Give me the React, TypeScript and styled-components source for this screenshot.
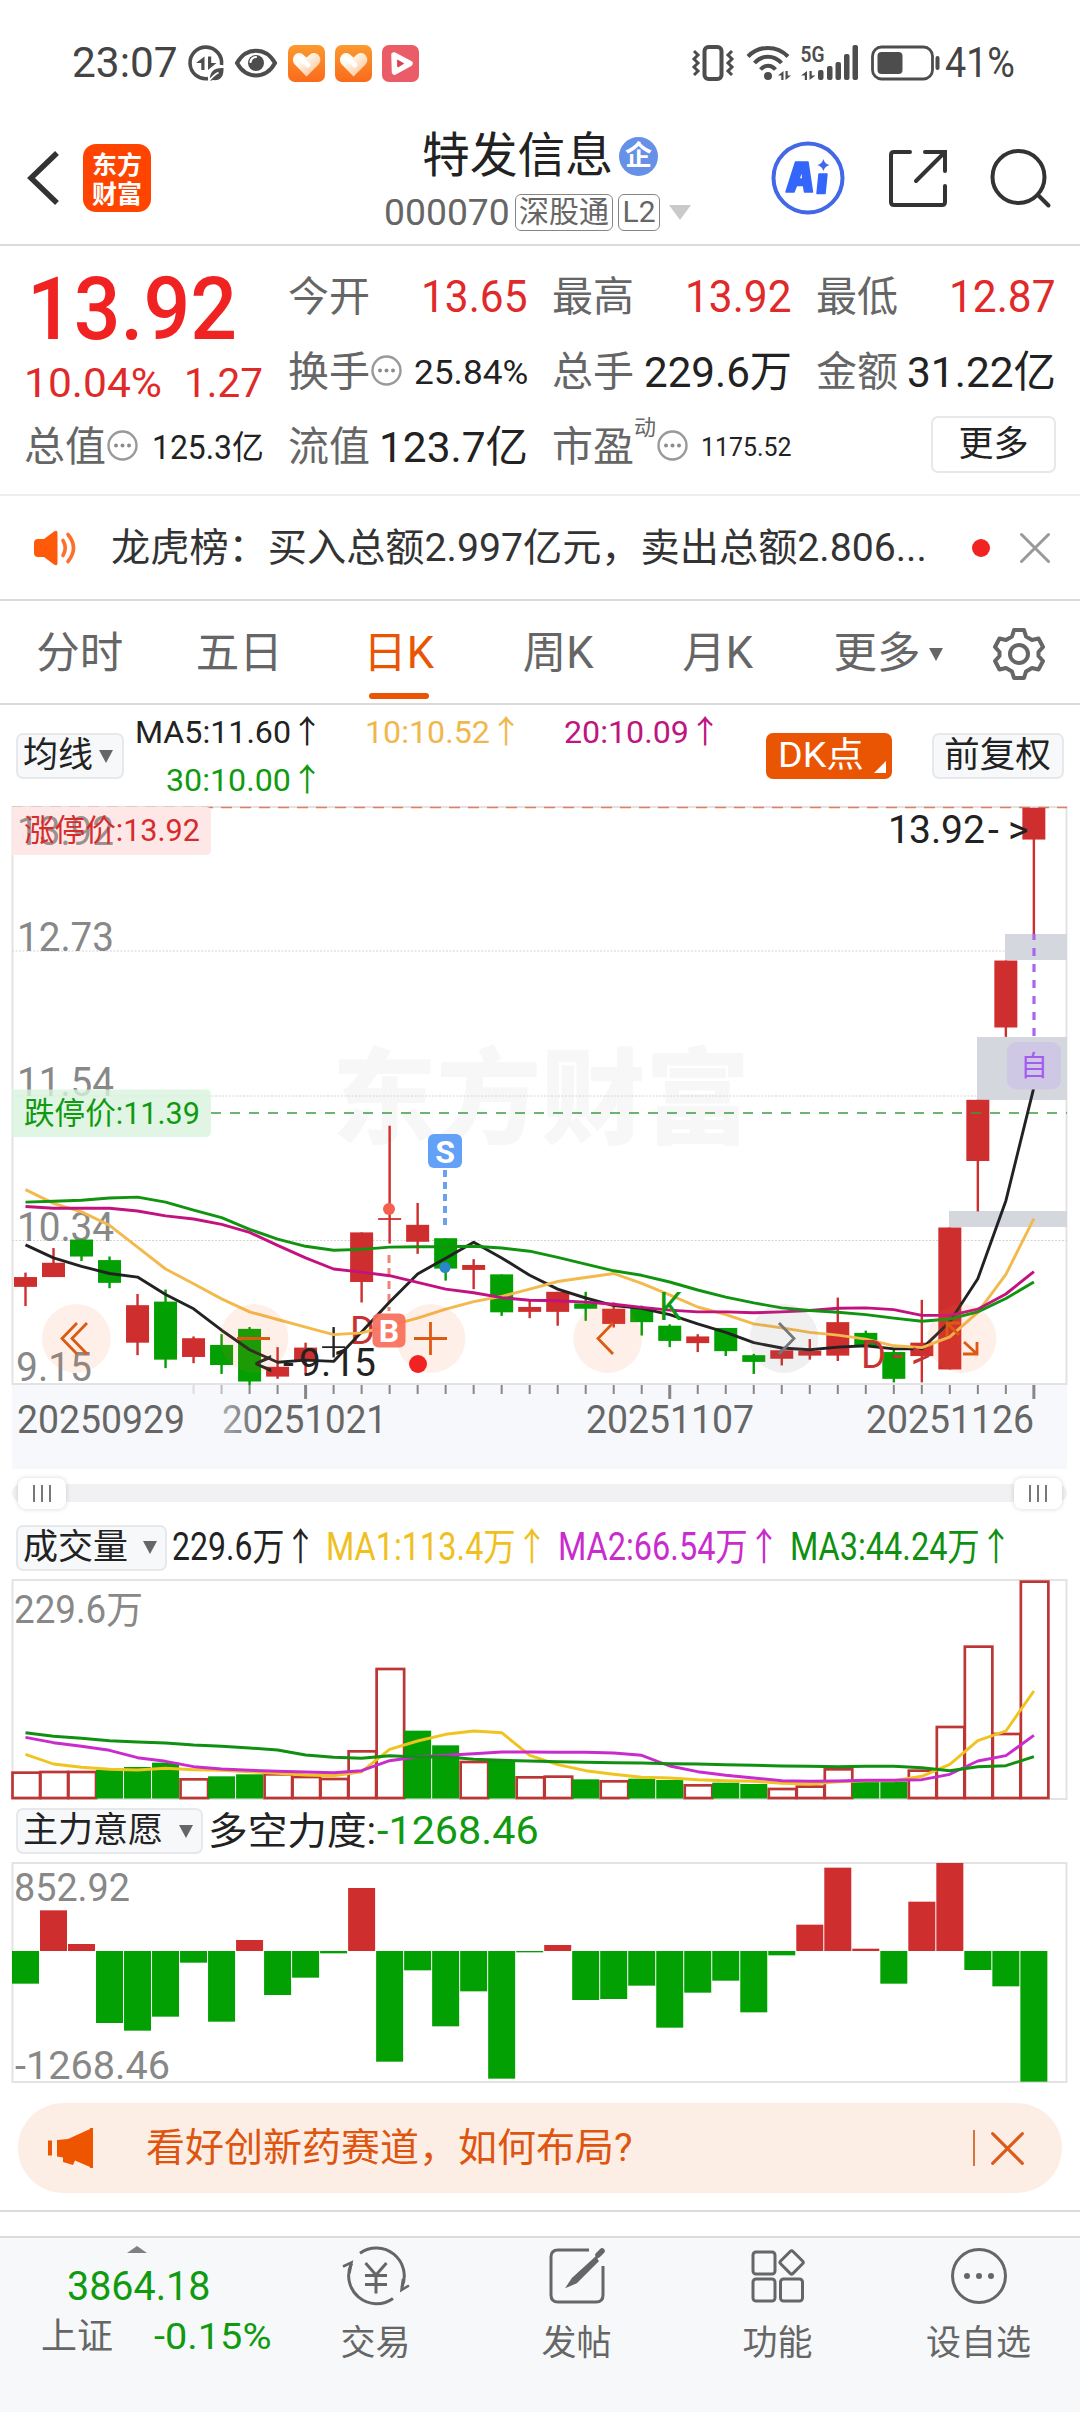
import React, { useLayoutEffect, useRef, useState } from "react";
import styled, { createGlobalStyle, css } from "styled-components";

const FONT = `Roboto, "Noto Sans CJK SC", sans-serif`;
const UP = "#cf2e2e";
const DOWN = "#02a002";
const ORANGE = "#ea5504";
const GREY = "#666666";
const INK = "#222222";

const GlobalStyle = createGlobalStyle`
  * { box-sizing: border-box; }
  body { margin: 0; background: #fff; font-family: ${FONT}; color: ${INK}; }
  svg { display: block; flex: none; overflow: visible; }
  svg text { font-family: ${FONT}; }
`;

/* ---------- text that fills a fixed advance width ---------- */

const FitBox = styled.span<{ $w: number }>`
  display: block;
  flex: none;
  width: ${(p) => p.$w}px;
  white-space: nowrap;
`;
const FitInner = styled.span`
  display: inline-block;
  transform-origin: 0 50%;
`;

function Fit({ w, children }: { w: number; children: React.ReactNode }) {
  const ref = useRef<HTMLSpanElement>(null);
  const [k, setK] = useState(1);
  useLayoutEffect(() => {
    if (ref.current && ref.current.offsetWidth) setK(w / ref.current.offsetWidth);
  }, [w, children]);
  return (
    <FitBox $w={w}>
      <FitInner ref={ref} style={{ transform: `scaleX(${k})` }}>
        {children}
      </FitInner>
    </FitBox>
  );
}

/* ---------- page frame ---------- */

const Page = styled.div`
  width: 1080px;
  height: 2412px;
  display: flex;
  flex-direction: column;
  background: #fff;
  overflow: hidden;
`;

/* ---------- status bar ---------- */

const StatusBar = styled.div`
  height: 100px;
  padding: 26px 65px 0 72px;
  display: flex;
  align-items: center;
  justify-content: space-between;
  font-size: 42px;
  line-height: 76px;
  color: #444;
`;
const StatusGroup = styled.div<{ $gap: number }>`
  display: flex;
  align-items: center;
  gap: ${(p) => p.$gap}px;
`;

const DataSaverIcon = () => (
  <svg width="36" height="36" viewBox="0 0 36 36" fill="none">
    <path d="M33.5 20A15.8 15.8 0 1 0 20 33.6" stroke="#4d4d4d" strokeWidth="3.6" />
    <path d="M16.5 11.5v13.5h-3.2v-7H8zM20 25V11.5h3.2v6.5h5.3z" fill="#4d4d4d" />
    <path d="M22 36c-1-9 4-13.500 13.500-13 .5 9-3.500 13-10.500 12z" fill="#4d4d4d" />
    <path d="M20.500 36.500c3-4 6-7 10-9" stroke="#fff" strokeWidth="1.800" />
  </svg>
);
const EyeIcon = () => (
  <svg width="44" height="30" viewBox="0 0 44 30" fill="none">
    <path d="M3 15C12 -1.500 32 -1.500 41 15C32 31.500 12 31.500 3 15Z" stroke="#4d4d4d" strokeWidth="4" />
    <circle cx="22" cy="15" r="8" fill="#4d4d4d" />
    <path d="M16.500 14a6 6 0 0 1 5.500-5" stroke="#fff" strokeWidth="2.200" strokeLinecap="round" />
  </svg>
);
const HeartAppIcon = ({ id }: { id: string }) => (
  <svg width="37" height="37" viewBox="0 0 37 37">
    <defs>
      <linearGradient id={id} x1="0" y1="0" x2="0" y2="1">
        <stop offset="0" stopColor="#fb9a2e" />
        <stop offset="1" stopColor="#fa6a1c" />
      </linearGradient>
      <linearGradient id={id + "h"} x1="0" y1="0" x2="1" y2="1">
        <stop offset="0.300" stopColor="#fffaf0" />
        <stop offset="1" stopColor="#fdb983" />
      </linearGradient>
    </defs>
    <rect width="37" height="37" rx="7" fill={`url(#${id})`} />
    <path d="M18.500 31.500L6.800 19.500C1.500 13.500 8.500 5 14.700 9.200L18.500 12.500L22.300 9.200C28.500 5 36 13.500 30.500 19.500Z" fill={`url(#${id}h)`} />
    <path d="M11 12.500l9 7.500" stroke="#fff" strokeWidth="5" strokeLinecap="round" />
  </svg>
);
const PlayAppIcon = () => (
  <svg width="37" height="37" viewBox="0 0 37 37">
    <rect width="37" height="37" rx="7" fill="#ea5c68" />
    <path d="M12 10L28 18.500L12.500 27Z" fill="#ea5c68" stroke="#fff" strokeWidth="5.500" strokeLinejoin="round" />
    <path d="M15.500 14.500L22 18.500L16 22.500Z" fill="#dd3f55" />
  </svg>
);
const VibrateIcon = () => (
  <svg width="50" height="36" viewBox="0 0 50 36" fill="none" stroke="#4d4d4d">
    <rect x="12.500" y="2" width="17" height="32" rx="4" strokeWidth="4" />
    <path d="M2 6l4 4-4 4 4 4-4 4 4 4-4 4M40 6l-4 4 4 4-4 4 4 4-4 4 4 4" strokeWidth="3" />
  </svg>
);
const WifiIcon = () => (
  <svg width="50" height="36" viewBox="0 0 50 36" fill="none" stroke="#4d4d4d" strokeWidth="4">
    <path d="M2 11.500C13 0 31 0 42 11.500M8.500 18C16 9.500 28 9.500 35.500 18M14.500 24.500C19 19.500 25 19.500 29.500 24.500" />
    <circle cx="22" cy="31" r="4" fill="#4d4d4d" stroke="none" />
    <path d="M37.500 26v9h-2.200v-4.500H32zM39.500 35v-9h2.200v4.500H45z" fill="#4d4d4d" stroke="none" />
  </svg>
);
const SignalIcon = () => (
  <svg width="67" height="36" viewBox="0 0 67 36" fill="#4d4d4d">
    <text x="0.500" y="17" fontSize="22.500" fontWeight="600" textLength="24" lengthAdjust="spacingAndGlyphs">5G</text>
    <path d="M7 26v9H4.800v-4.500H1zM9.500 35v-9h2.200v4.500H15.500z" />
    <rect x="18" y="25" width="5.500" height="10" rx="2" />
    <rect x="27" y="21" width="5.500" height="14" rx="2" />
    <rect x="35.500" y="17" width="5.500" height="18" rx="2" />
    <rect x="44" y="9" width="5.500" height="26" rx="2" />
    <rect x="52.500" y="0" width="5.500" height="35" rx="2" />
  </svg>
);
const BatteryIcon = () => (
  <svg width="70" height="36" viewBox="0 0 70 36" fill="none">
    <rect x="1.500" y="2" width="60" height="32" rx="9" stroke="#4d4d4d" strokeWidth="2.800" />
    <rect x="6.500" y="7" width="25" height="22" rx="4" fill="#4d4d4d" />
    <path d="M66.500 13v10" stroke="#4d4d4d" strokeWidth="4" strokeLinecap="round" />
  </svg>
);

/* ---------- header ---------- */

const Header = styled.header`
  height: 146px;
  border-bottom: 2px solid #d9dadb;
  padding: 0 28px 0 25px;
  display: grid;
  grid-template-columns: 340px 1fr 280px;
`;
const HeaderSide = styled.div<{ $right?: boolean }>`
  display: flex;
  align-items: center;
  height: 156px;
  gap: ${(p) => (p.$right ? 42.5 : 21)}px;
  justify-content: ${(p) => (p.$right ? "flex-end" : "flex-start")};
`;
const Logo = styled.div`
  width: 68px;
  height: 68px;
  border-radius: 13px;
  background: #ff4400;
  color: #fff;
  display: grid;
  place-content: center;
  font: 700 25px/29px "Noto Sans CJK SC", sans-serif;
`;
const TitleBlock = styled.div`
  display: flex;
  flex-direction: column;
  padding-top: 27px;
`;
const TitleRow = styled.div`
  display: flex;
  align-items: center;
  padding-left: 57px;
  gap: 6px;
  height: 58px;
  font-size: 48px;
  line-height: 58px;
`;
const Badge = styled.span`
  width: 39px;
  height: 39px;
  border-radius: 50%;
  background: #6691e6;
  color: #fff;
  font-size: 27px;
  font-weight: 700;
  line-height: 38px;
  text-align: center;
`;
const CodeRow = styled.div`
  display: flex;
  align-items: center;
  padding-left: 19px;
  gap: 5px;
  height: 55px;
  font-size: 37px;
  line-height: 55px;
  color: ${GREY};
`;
const CodeTag = styled.span<{ $w: number }>`
  width: ${(p) => p.$w}px;
  height: 37px;
  margin-top: -1px;
  border: 1.500px solid #858585;
  border-radius: 6px;
  font-size: 30px;
  line-height: 34px;
  display: flex;
  justify-content: center;
`;
const Caret = styled.span<{ $w: number; $h: number; $c: string; $ml?: number; $up?: boolean }>`
  flex: none;
  width: 0;
  height: 0;
  margin-left: ${(p) => p.$ml ?? 0}px;
  border: solid transparent;
  border-width: 0 ${(p) => p.$w / 2}px;
  ${(p) =>
    p.$up
      ? css`border-bottom: ${p.$h}px solid ${p.$c};`
      : css`border-top: ${p.$h}px solid ${p.$c};`}
`;

const BackIcon = () => (
  <svg width="37" height="56" viewBox="0 0 37 56" fill="none">
    <path d="M32 3L6 28L32 53" stroke="#333" strokeWidth="5.500" />
  </svg>
);
const AiIcon = () => (
  <svg width="74" height="74" viewBox="0 0 74 74">
    <circle cx="37" cy="37" r="34.500" fill="none" stroke="#4268e8" strokeWidth="4" />
    <path d="M15 51L24.500 21H37L41.500 51H33.500L32.500 44.500H25.500L23 51ZM28 38H31.800L31 29Z" fill="#3566fb" fillRule="evenodd" stroke="#3566fb" strokeWidth="1.500" strokeLinejoin="round" />
    <path d="M48 33H56L54 52.500H46Z" fill="#3566fb" stroke="#3566fb" strokeWidth="1.500" strokeLinejoin="round" />
    <path d="M52.500 18Q53.500 23 58.500 24Q53.500 25.500 52.500 30Q51 25.500 46.500 24Q51 23 52.500 18Z" fill="#4268e8" />
  </svg>
);
const ShareIcon = () => (
  <svg width="60" height="60" viewBox="0 0 60 60" fill="none" stroke="#333" strokeWidth="4" strokeLinecap="round">
    <path d="M22 4H6Q3 4 3 7V54Q3 57 6 57H54Q57 57 57 54V38M37 4H57V23M57 4L28 33" />
  </svg>
);
const SearchIcon = () => (
  <svg width="62" height="60" viewBox="0 0 62 60" fill="none" stroke="#333" strokeWidth="4" strokeLinecap="round">
    <circle cx="28.500" cy="29" r="26" />
    <path d="M48 47L58.500 57.500" />
  </svg>
);

/* ---------- quote ---------- */

const Quote = styled.section`
  height: 250px;
  border-bottom: 2px solid #eeeeef;
  padding: 14px 24px 0;
  display: grid;
  grid-template-columns: 239px 239px 239px 239px;
  grid-template-rows: 75px 75px 74px;
  column-gap: 25px;
`;
const PriceCell = styled.div`
  grid-row: span 2;
  display: flex;
  flex-direction: column;
  color: #e02a2a;
`;
const Price = styled.div`
  height: 97px;
  padding-left: 3px;
  font-size: 87px;
  line-height: 98px;
  font-weight: 500;
  color: #f02222;
`;
const ChangeRow = styled.div`
  display: flex;
  justify-content: space-between;
  font-size: 41px;
  line-height: 53px;
`;
const Cell = styled.div`
  display: flex;
  align-items: center;
  justify-content: space-between;
  height: 75px;
  line-height: 75px;
`;
const Label = styled.span`
  display: flex;
  align-items: center;
  font-size: 41px;
  color: ${GREY};
`;
const Value = styled.span<{ $size: number; $red?: boolean }>`
  margin-right: -1px;
  font-size: ${(p) => p.$size}px;
  color: ${(p) => (p.$red ? "#e02a2a" : INK)};
`;
const Sup = styled.span`
  align-self: flex-start;
  font-size: 22px;
  line-height: 36px;
`;
const MoreButton = styled.button`
  justify-self: end;
  align-self: center;
  width: 125px;
  height: 57px;
  margin: -5px -1px 0 0;
  border: 2px solid #e6e8e9;
  border-radius: 7px;
  background: #fff;
  color: ${INK};
  font: 35px/50px ${FONT};
  padding: 0;
`;
const InfoBox = styled.span`
  margin: -4px 0 0 1px;
`;
const InfoDot = () => (
  <InfoBox>
    <svg width="31" height="31" viewBox="0 0 31 31" fill="#8c8c8c">
      <circle cx="15.500" cy="15.500" r="14" fill="none" stroke="#999" strokeWidth="2.400" />
      <circle cx="9" cy="15.500" r="2" />
      <circle cx="15.500" cy="15.500" r="2" />
      <circle cx="22" cy="15.500" r="2" />
    </svg>
  </InfoBox>
);

/* ---------- news ---------- */

const News = styled.section`
  height: 105px;
  border-bottom: 2px solid #d9dadb;
  padding: 0 30px 0 33px;
  display: flex;
  align-items: center;
  font-size: 39px;
  line-height: 102px;
  color: #333;
`;
const NewsText = styled.div`
  margin-left: 33px;
`;
const RedDot = styled.span`
  width: 18px;
  height: 18px;
  border-radius: 50%;
  background: #f02222;
  margin-left: auto;
  margin-right: 30px;
`;
const SpeakerIcon = () => (
  <svg width="45" height="36" viewBox="0 0 45 36">
    <path d="M1 13Q1 9 5 9H11L21 1.500Q24.500 -.5 24.500 3V33Q24.500 36.500 21 34.500L11 27H5Q1 27 1 23Z" fill="#ff5a0a" />
    <path d="M30 10.500Q34.500 18 30 25.500M35 4.500Q46 18 35 31.500" fill="none" stroke="#ff6f2c" strokeWidth="3.600" strokeLinecap="round" />
  </svg>
);
const CloseIcon = ({ size, color, w }: { size: number; color: string; w: number }) => (
  <svg width={size} height={size} viewBox="0 0 30 30">
    <path d="M1.500 1.500L28.500 28.500M28.500 1.500L1.500 28.500" stroke={color} strokeWidth={w} strokeLinecap="round" />
  </svg>
);

/* ---------- period tabs ---------- */

const Tabs = styled.nav`
  height: 104px;
  border-bottom: 2px solid #d9dadb;
  display: grid;
  grid-template-columns: repeat(5, 159.500px) 181px 80px;
  font-size: 43.500px;
  line-height: 102px;
  color: ${GREY};
`;
const Tab = styled.div<{ $on?: boolean }>`
  position: relative;
  display: flex;
  align-items: center;
  justify-content: center;
  padding-top: 2px;
  ${(p) =>
    p.$on &&
    css`
      color: ${ORANGE};
      &::after {
        content: "";
        position: absolute;
        left: 50%;
        bottom: 6px;
        width: 60px;
        height: 6px;
        margin-left: -30px;
        border-radius: 3px;
        background: ${ORANGE};
      }
    `}
`;
const GearIcon = () => (
  <svg width="52" height="54" viewBox="0 0 52 54" fill="none" stroke={GREY} strokeWidth="4" strokeLinejoin="round">
    <path d="M21 3H31L33 9.500L39 13L45.500 11.500L50 20L45.500 25V29L50 34L45.500 42.500L39 41L33 44.500L31 51H21L19 44.500L13 41L6.500 42.500L2 34L6.500 29V25L2 20L6.500 11.500L13 13L19 9.500Z" />
    <circle cx="26" cy="27" r="9" />
  </svg>
);

/* ---------- moving averages ---------- */

const MaRow = styled.div`
  height: 101px;
  padding: 0 16px 0 16px;
  display: flex;
`;
const Chip = styled.div<{ $w: number; $solid?: boolean; $pl?: number }>`
  position: relative;
  flex: none;
  width: ${(p) => p.$w}px;
  height: 46px;
  padding-left: ${(p) => p.$pl ?? 5}px;
  display: flex;
  align-items: center;
  border: 2px solid ${(p) => (p.$solid ? ORANGE : "#e6e8eb")};
  border-radius: 7px;
  background: ${(p) => (p.$solid ? ORANGE : "#f7f8fa")};
  color: ${(p) => (p.$solid ? "#fff" : INK)};
  font-size: 35px;
  line-height: 42px;
`;
const ChipSlot = styled.div<{ $ml?: number }>`
  padding-top: 28px;
  margin-left: ${(p) => p.$ml ?? 0}px;
`;
const Corner = styled.span`
  position: absolute;
  right: 4px;
  bottom: 4px;
  border: solid transparent;
  border-width: 0 0 12px 12px;
  border-bottom-color: #fff;
`;
const MaGrid = styled.div`
  width: 642px;
  padding-left: 13px;
  padding-top: 3px;
  display: grid;
  grid-template-columns: 186px 152px 152px;
  grid-template-rows: 48px 48px;
  column-gap: 47px;
  font-size: 32px;
  line-height: 48px;
`;
const Ma = styled.div<{ $c: string }>`
  color: ${(p) => p.$c};
  display: flex;
  justify-content: flex-end;
`;

/* ---------- charts ---------- */

const cx = (i: number) => 25.5 + 28.01 * i;
const py = (v: number) => 790 + v / 2.24;
const vy = (v: number) => 1460 + v / 3;
const fy = (v: number) => 1800 + v / 3;
const path = (ys: number[], f: (v: number) => number) =>
  ys.map((v, i) => `${i ? "L" : "M"}${cx(i).toFixed(1)} ${f(v).toFixed(1)}`).join("");

// high, body top, body bottom, low, direction
const CANDLES: [number, number, number, number, number][] = [
  [1081, 1091, 1113, 1156, 1], [1026, 1059, 1091, 1091, 1], [1007, 1007, 1045, 1055, 0],
  [1045, 1053, 1104, 1116, 0], [1129, 1154, 1238, 1266, 1], [1119, 1146, 1276, 1295, 0],
  [1224, 1228, 1270, 1284, 1], [1219, 1243, 1288, 1308, 0], [1203, 1207, 1325, 1333, 0],
  [1248, 1292, 1314, 1319, 1], [1238, 1249, 1277, 1310, 1], [1203, 1246, 1250, 1271, 2],
  [991, 991, 1102, 1148, 1], [752, 959, 963, 1016, 1], [925, 974, 1012, 1039, 1],
  [1004, 1004, 1072, 1099, 0], [1051, 1064, 1075, 1118, 1], [1085, 1085, 1170, 1178, 0],
  [1143, 1158, 1169, 1183, 1], [1124, 1124, 1169, 1200, 1], [1124, 1150, 1162, 1189, 0],
  [1148, 1162, 1196, 1204, 1], [1155, 1159, 1192, 1222, 0], [1197, 1200, 1234, 1248, 0],
  [1219, 1224, 1239, 1259, 1], [1205, 1205, 1257, 1268, 0], [1263, 1266, 1281, 1308, 0],
  [1250, 1255, 1274, 1289, 1], [1230, 1256, 1267, 1276, 1], [1137, 1192, 1267, 1279, 1],
  [1211, 1216, 1246, 1246, 0], [1254, 1259, 1319, 1327, 0], [1142, 1238, 1268, 1327, 1],
  [980, 980, 1298, 1298, 1], [694, 694, 831, 944, 1], [382, 382, 532, 553, 1], [40, 40, 111, 323, 1],
];
const MA5 = [1019, 1048, 1067, 1083, 1091, 1130, 1162, 1210, 1254, 1282, 1277, 1280, 1214, 1147, 1084, 1049, 1013, 1048, 1087, 1118, 1138, 1155, 1161, 1175, 1196, 1215, 1238, 1250, 1254, 1248, 1245, 1252, 1252, 1191, 1095, 920, 666];
const MA10 = [895, 926, 945, 975, 1024, 1073, 1106, 1140, 1169, 1186, 1203, 1220, 1216, 1200, 1183, 1163, 1146, 1134, 1118, 1101, 1092, 1083, 1105, 1131, 1158, 1175, 1196, 1205, 1215, 1221, 1230, 1245, 1249, 1225, 1170, 1085, 960];
const MA20 = [933, 937, 937, 937, 943, 954, 961, 973, 991, 1020, 1048, 1073, 1080, 1088, 1103, 1118, 1126, 1137, 1143, 1144, 1147, 1152, 1159, 1165, 1169, 1169, 1171, 1169, 1166, 1161, 1160, 1164, 1177, 1177, 1163, 1129, 1079];
const MA30 = [923, 921, 919, 914, 912, 923, 941, 958, 984, 1006, 1022, 1031, 1029, 1024, 1023, 1023, 1022, 1026, 1033, 1047, 1062, 1077, 1087, 1102, 1120, 1136, 1149, 1160, 1166, 1170, 1175, 1183, 1190, 1185, 1169, 1139, 1102];
const candleColor = (d: number) => (d === 1 ? UP : d === 0 ? DOWN : INK);

const TextRun = (p: { x: number; y: number; w: number; size: number; fill: string; children: string }) => (
  <text x={p.x} y={p.y} fontSize={p.size} fill={p.fill} textLength={p.w} lengthAdjust="spacingAndGlyphs">
    {p.children}
  </text>
);

function CandleChart() {
  return (
    <svg width="1080" height="664" viewBox="0 806 1080 664">
      <defs>
        <linearGradient id="dateFade" gradientUnits="userSpaceOnUse" x1="222" x2="262" y1="0" y2="0">
          <stop offset="0" stopColor="#aaa" />
          <stop offset="1" stopColor={GREY} />
        </linearGradient>
      </defs>
      <rect x="12" y="1384" width="1055" height="85" fill="#f7f8fb" />
      <text x="332" y="1136" fontSize="104" fontWeight="900" fill="#f7f7f7" textLength="418" lengthAdjust="spacingAndGlyphs">东方财富</text>
      <rect x="12.500" y="807" width="1054" height="577" fill="none" stroke="#e3e3e3" strokeWidth="2" />
      {[951, 1096, 1240.5].map((y) => (
        <line key={y} x1="12" x2="1067" y1={y} y2={y} stroke="#d4d4d4" strokeWidth="1" strokeDasharray="2 1.500" />
      ))}
      <line x1="12" x2="1067" y1="807.500" y2="807.500" stroke="#e08060" strokeWidth="1.500" strokeDasharray="11 8" />
      <rect x="1005" y="934" width="62" height="26" fill="#d4d8de" />
      <rect x="977" y="1037" width="90" height="63" fill="#d4d8de" />
      <rect x="949" y="1211" width="118" height="16" fill="#d4d8de" />
      <TextRun x={17} y={951} w={97} size={40} fill="#888">12.73</TextRun>
      <TextRun x={17} y={1096} w={97} size={40} fill="#888">11.54</TextRun>
      <TextRun x={17} y={1240.5} w={97} size={40} fill="#888">10.34</TextRun>
      <TextRun x={16} y={1381} w={76} size={40} fill="#888">9.15</TextRun>

      {CANDLES.map(([h, t, b, l, d], i) => (
        <g key={i} fill={candleColor(d)}>
          <rect x={cx(i) - 1.2} y={py(h)} width="2.400" height={py(l) - py(h)} />
          <rect x={cx(i) - 11.5} y={py(t)} width="23" height={py(b) - py(t)} />
        </g>
      ))}
      <line x1="211" x2="1067" y1="1113" y2="1113" stroke="#3f9a3f" strokeWidth="1.300" strokeDasharray="10 9" />
      <line x1="445" x2="445" y1="1170" y2="1227" stroke="#6aa2ee" strokeWidth="4" strokeDasharray="7 5" />
      <circle cx="445" cy="1267.500" r="5.500" fill="#2a86c8" />
      <circle cx="389" cy="1209" r="6" fill="#f5604e" />
      <line x1="389" x2="389" y1="1255" y2="1311" stroke="#f08474" strokeWidth="3" strokeDasharray="8 5" />
      <TextRun x={350} y={1343.5} w={25} size={39} fill="#c83232">D</TextRun>

      <g fill="none" strokeWidth="2.900" strokeLinejoin="round">
        <path d={path(MA5, py)} stroke={INK} />
        <path d={path(MA10, py)} stroke="#f3b94d" />
        <path d={path(MA20, py)} stroke="#c2127f" />
        <path d={path(MA30, py)} stroke="#109410" />
      </g>
      <rect x="372.500" y="1313.500" width="33" height="34" rx="6" fill="#f96f5c" fillOpacity="0.930" />
      <text x="389" y="1342" fontSize="32" fontWeight="700" fill="#fff" textAnchor="middle">B</text>

      <path d="M12 807H206Q211 807 211 812V850Q211 855 206 855H12Z" fill="#fee7e7" />
      <TextRun x={17} y={844.5} w={97} size={40} fill="#999090">13.92</TextRun>
      <TextRun x={24} y={841} w={176} size={31} fill="#d62c2c">涨停价:13.92</TextRun>
      <path d="M12 1089.500H206Q211 1089.500 211 1094.500V1132Q211 1137 206 1137H12Z" fill="#d9f2dd" fillOpacity="0.800" />
      <TextRun x={24} y={1124} w={176} size={31} fill="#109a10">跌停价:11.39</TextRun>

      <rect x="428" y="1134" width="34" height="34" rx="6" fill="#63a1f8" />
      <text x="445" y="1162.500" fontSize="32" fontWeight="700" fill="#fff" textAnchor="middle">S</text>
      <text x="888 909 931 941 963 988 1008" y="842.500" fontSize="39" fill={INK}>13.92-&gt;</text>
      <text x="254 283 299 321 333 354" y="1376" fontSize="39" fill={INK}>&lt;-9.15</text>
      <TextRun x={659} y={1320} w={23} size={38} fill="#109a10">K</TextRun>
      <text x="861 892 911" y="1368" fontSize="38" fill="#c83232">D-&gt;</text>

      <line x1="1034" x2="1034" y1="934" y2="1040" stroke="#a868ee" strokeWidth="3.200" strokeDasharray="8 8" strokeDashoffset="2" />
      <rect x="1007" y="1042" width="54" height="47.500" rx="9" fill="#cfc8e4" />
      <text x="1034" y="1076" fontSize="28" fill="#a25df0" textAnchor="middle">自</text>

      {[76.4, 254, 431, 607.7, 784, 962].map((x) => (
        <circle key={x} cx={x} cy="1338.500" r="34.400" fill={x === 784 ? "#777" : "#f57a35"} fillOpacity="0.110" />
      ))}
      <g fill="none" stroke="#dc5a12" strokeWidth="2.800">
        <path d="M77 1323L62 1338.500L77 1354M87 1323L72 1338.500L87 1354" />
        <path d="M237 1338.500H270" />
        <path d="M414 1338.500H447M430.500 1322V1355" />
        <path d="M613 1323L598 1338.500L613 1354" />
        <path d="M779 1323L794 1338.500L779 1354" stroke="#777" />
        <path d="M947 1336V1323H960M947 1323L959 1335M977 1342V1354H963M977 1354L964 1342" />
      </g>
      <circle cx="418" cy="1364" r="9" fill="#f02222" />

      {CANDLES.map((_, i) => {
        const big = i === 10 || i === 23 || i === 36;
        if (i < 6) return null;
        return (
          <rect key={i} x={cx(i) - (big ? 1.5 : 1)} y="1385" width={big ? 3 : 2} height={big ? 14 : 9} fill={i === 6 ? "#ddd" : i === 7 ? "#bbb" : "#888"} />
        );
      })}
      <TextRun x={17} y={1433} w={168} size={38} fill={GREY}>20250929</TextRun>
      <TextRun x={222} y={1433} w={165} size={38} fill="url(#dateFade)">20251021</TextRun>
      <TextRun x={586} y={1433} w={168} size={38} fill={GREY}>20251107</TextRun>
      <TextRun x={866} y={1433} w={168} size={38} fill={GREY}>20251126</TextRun>
    </svg>
  );
}

const SliderRow = styled.div`
  height: 46px;
  padding: 0 13px 0 12px;
  display: flex;
  align-items: center;
`;
const Track = styled.div`
  flex: 1;
  height: 18px;
  border-radius: 9px;
  background: #f1f1f4;
  padding: 0 5px 0 6px;
  display: flex;
  align-items: center;
  justify-content: space-between;
`;
const Handle = styled.div`
  width: 48px;
  height: 31px;
  border-radius: 8px;
  background: #fff;
  box-shadow: 0 0 5px rgba(0, 0, 0, 0.16);
  display: flex;
  align-items: center;
  justify-content: center;
  gap: 6px;
`;
const Grip = styled.i`
  width: 2px;
  height: 17px;
  background: #777;
`;

const IndicatorRow = styled.div<{ $h: number }>`
  height: ${(p) => p.$h}px;
  padding-left: 16px;
  display: flex;
  align-items: center;
  font-size: 38px;
  line-height: ${(p) => p.$h}px;
`;
const IndicatorValue = styled.div<{ $c: string; $w?: number; $ml?: number }>`
  flex: none;
  color: ${(p) => p.$c};
  width: ${(p) => (p.$w ? p.$w + "px" : "auto")};
  margin-left: ${(p) => p.$ml ?? 0}px;
`;

const VOL = [935, 933, 933, 930, 921, 908, 955, 949, 943, 940, 948, 954, 871, 624, 812, 856, 903, 901, 949, 947, 958, 961, 956, 960, 973, 968, 972, 984, 977, 925, 965, 965, 929, 798, 557, 819, 362];
const VOL_DOWN = [3, 4, 5, 7, 8, 14, 15, 17, 20, 22, 23, 25, 26, 30, 31];
const V5 = [883, 912, 922, 928, 930, 925, 929, 931, 935, 940, 945, 947, 935, 868, 843, 823, 813, 818, 886, 914, 932, 943, 952, 954, 959, 962, 964, 970, 972, 965, 962, 962, 949, 913, 842, 813, 693];
const V10 = [832, 848, 859, 871, 893, 904, 920, 927, 931, 934, 936, 938, 932, 902, 890, 886, 881, 876, 876, 877, 877, 879, 886, 918, 935, 946, 954, 962, 964, 963, 961, 961, 959, 943, 903, 887, 826];
const V20 = [818, 829, 835, 842, 846, 849, 855, 859, 864, 870, 885, 892, 895, 887, 891, 890, 898, 901, 903, 905, 907, 908, 909, 911, 912, 914, 916, 918, 919, 920, 919, 919, 923, 932, 920, 917, 890];

function VolumeChart() {
  return (
    <svg width="1080" height="221" viewBox="0 1579 1080 221">
      <rect x="12.500" y="1580" width="1054" height="219" fill="none" stroke="#e3e3e3" strokeWidth="2" />
      {VOL.map((v, i) =>
        VOL_DOWN.includes(i) ? (
          <rect key={i} x={cx(i) - 13.5} y={vy(v)} width="27" height={1798.5 - vy(v)} fill={DOWN} />
        ) : (
          <rect key={i} x={cx(i) - 13} y={vy(v) + 1} width="27.500" height={1797 - vy(v)} fill="#fff" stroke="#bc3636" strokeWidth="2.700" />
        )
      )}
      <g fill="none" strokeWidth="2.900" strokeLinejoin="round">
        <path d={path(V5, vy)} stroke="#f0c31e" />
        <path d={path(V10, vy)} stroke="#c82ccc" />
        <path d={path(V20, vy)} stroke="#109010" />
      </g>
      <TextRun x={14} y={1623} w={129} size={38} fill="#888">229.6万</TextRun>
    </svg>
  );
}

const FORCE = [551, 331, 432, 669, 692, 650, 488, 665, 420, 585, 533, 460, 264, 785, 511, 679, 574, 836, 457, 435, 600, 597, 557, 683, 578, 542, 637, 466, 374, 203, 446, 551, 305, 189, 510, 559, 845];

function ForceChart() {
  return (
    <svg width="1080" height="221" viewBox="0 1862 1080 221">
      <rect x="12.500" y="1863" width="1054" height="219" fill="none" stroke="#e3e3e3" strokeWidth="2" />
      {FORCE.map((v, i) => (
        <rect key={i} x={cx(i) - 13.5} y={fy(Math.min(v, 453))} width="27" height={Math.abs(v - 453) / 3} fill={v < 453 ? UP : DOWN} />
      ))}
      <TextRun x={14} y={1901} w={116} size={38} fill="#888">852.92</TextRun>
      <TextRun x={15} y={2079} w={155} size={38} fill="#888">-1268.46</TextRun>
    </svg>
  );
}

/* ---------- banner ---------- */

const Banner = styled.div`
  height: 90px;
  margin: 20px 18px 17px;
  padding: 0 38px 0 30px;
  border-radius: 45px;
  background: #fdeee5;
  color: #de5510;
  display: flex;
  align-items: center;
  font-size: 39px;
  line-height: 88px;
`;
const BannerText = styled.div`
  flex: 1;
  padding-left: 52px;
`;
const BannerRule = styled.i`
  width: 2px;
  height: 36px;
  background: #d8743e;
  margin-right: 16px;
`;
const HornIcon = () => (
  <svg width="46" height="40" viewBox="0 0 46 40" fill="#ee5500">
    <rect x="0" y="12.500" width="4" height="15" />
    <path d="M9 12L20 11L42 1V0H45V40H42V39L27 32.500L25 37L15 34V29.500L9 28.500Z" />
  </svg>
);
const Divider = styled.div`
  height: 28px;
  border-top: 2px solid #d9dbdd;
  border-bottom: 2px solid #d9dbdd;
`;

/* ---------- bottom nav ---------- */

const BottomNav = styled.nav`
  flex: 1;
  background: #f7f8fa;
  display: grid;
  grid-template-columns: 275px repeat(4, 201px);
`;
const IndexCell = styled.div`
  display: flex;
  flex-direction: column;
  padding: 8px 4px 0 41px;
  color: #109a10;
`;
const IndexValue = styled.div`
  padding-left: 26px;
  font-size: 40px;
  line-height: 68px;
`;
const IndexRow = styled.div`
  display: flex;
  align-items: center;
  justify-content: space-between;
  font-size: 37px;
  line-height: 32px;
`;
const IndexName = styled.span`
  font-size: 36px;
  color: ${GREY};
`;
const NavItem = styled.div`
  display: flex;
  flex-direction: column;
  align-items: center;
  padding-top: 7px;
  gap: 11px;
  font-size: 35px;
  line-height: 52px;
  color: ${GREY};
`;

const TradeIcon = () => (
  <svg width="68" height="62" viewBox="0 0 68 62" fill="none" stroke={GREY} strokeWidth="3">
    <path d="M18 8.200A28 28 0 0 1 60 42M51 53.500A28 28 0 0 1 9.500 18.500" />
    <path d="M1 21.500L9.500 17.500L7.500 28M67 40.500L59.500 45L61 34" strokeWidth="2.600" />
    <path d="M23.500 18L34 30L44.500 18M34 30V48.500M23 30.500H45M23 39.500H45" />
  </svg>
);
const PostIcon = () => (
  <svg width="56" height="62" viewBox="0 0 56 62" fill="none" stroke={GREY} strokeWidth="3">
    <path d="M40 5H9Q2 5 2 12V50Q2 57 9 57H47Q54 57 54 50V21" />
    <path d="M48 12L24 34L20 40L27 37L49 15" fill={GREY} stroke={GREY} strokeWidth="3" />
    <path d="M49 10L53 6" strokeWidth="5.500" strokeLinecap="round" />
  </svg>
);
const GridIcon = () => (
  <svg width="54" height="62" viewBox="0 0 54 62" fill="none" stroke={GREY} strokeWidth="3">
    <rect x="2" y="7" width="22" height="22" rx="3" />
    <rect x="2" y="34" width="22" height="22" rx="3" />
    <rect x="29.500" y="34" width="22" height="22" rx="3" />
    <rect x="31.500" y="8.500" width="17.500" height="17.500" rx="2" transform="rotate(45 40.250 17.750)" />
  </svg>
);
const DotsIcon = () => (
  <svg width="58" height="62" viewBox="0 0 58 62" fill={GREY}>
    <circle cx="29" cy="31" r="26.500" fill="none" stroke={GREY} strokeWidth="3" />
    <circle cx="17" cy="31" r="3" />
    <circle cx="29" cy="31" r="3" />
    <circle cx="41" cy="31" r="3" />
  </svg>
);

const NAV: [string, () => React.ReactElement][] = [
  ["交易", TradeIcon],
  ["发帖", PostIcon],
  ["功能", GridIcon],
  ["设自选", DotsIcon],
];

export default function App() {
  return (
    <Page>
      <GlobalStyle />
      <StatusBar>
        <StatusGroup $gap={10}>
          <Fit w={106}>23:07</Fit>
          <DataSaverIcon />
          <EyeIcon />
          <HeartAppIcon id="heartA" />
          <HeartAppIcon id="heartB" />
          <PlayAppIcon />
        </StatusGroup>
        <StatusGroup $gap={4}>
          <VibrateIcon />
          <WifiIcon />
          <SignalIcon />
          <BatteryIcon />
          <Fit w={70}>41%</Fit>
        </StatusGroup>
      </StatusBar>

      <Header>
        <HeaderSide>
          <BackIcon />
          <Logo>
            <div>东方</div>
            <div>财富</div>
          </Logo>
        </HeaderSide>
        <TitleBlock>
          <TitleRow>
            <Fit w={191}>特发信息</Fit>
            <Badge>企</Badge>
          </TitleRow>
          <CodeRow>
            <Fit w={126}>000070</Fit>
            <CodeTag $w={98}>深股通</CodeTag>
            <CodeTag $w={42}>L2</CodeTag>
            <Caret $w={23} $h={15} $c="#cacaca" $ml={4} />
          </CodeRow>
        </TitleBlock>
        <HeaderSide $right>
          <AiIcon />
          <ShareIcon />
          <SearchIcon />
        </HeaderSide>
      </Header>

      <Quote>
        <PriceCell>
          <Price><Fit w={210}>13.92</Fit></Price>
          <ChangeRow>
            <Fit w={138}>10.04%</Fit>
            <Fit w={79}>1.27</Fit>
          </ChangeRow>
        </PriceCell>
        <Cell><Label>今开</Label><Value $size={44} $red><Fit w={107}>13.65</Fit></Value></Cell>
        <Cell><Label>最高</Label><Value $size={44} $red><Fit w={107}>13.92</Fit></Value></Cell>
        <Cell><Label>最低</Label><Value $size={44} $red><Fit w={107}>12.87</Fit></Value></Cell>
        <Cell><Label>换手<InfoDot /></Label><Value $size={34}><Fit w={114}>25.84%</Fit></Value></Cell>
        <Cell><Label>总手</Label><Value $size={43}><Fit w={148}>229.6万</Fit></Value></Cell>
        <Cell><Label>金额</Label><Value $size={43}><Fit w={149}>31.22亿</Fit></Value></Cell>
        <Cell><Label>总值<InfoDot /></Label><Value $size={33}><Fit w={112}>125.3亿</Fit></Value></Cell>
        <Cell><Label>流值</Label><Value $size={43}><Fit w={149}>123.7亿</Fit></Value></Cell>
        <Cell><Label>市盈<Sup>动</Sup><InfoDot /></Label><Value $size={26}><Fit w={91}>1175.52</Fit></Value></Cell>
        <MoreButton>更多</MoreButton>
      </Quote>

      <News>
        <SpeakerIcon />
        <NewsText><Fit w={816}>龙虎榜：买入总额2.997亿元，卖出总额2.806...</Fit></NewsText>
        <RedDot />
        <CloseIcon size={30} color="#999" w={3} />
      </News>

      <Tabs>
        <Tab>分时</Tab>
        <Tab>五日</Tab>
        <Tab $on>日K</Tab>
        <Tab>周K</Tab>
        <Tab>月K</Tab>
        <Tab>更多<Caret $w={15} $h={13} $c="#666" $ml={8} /></Tab>
        <Tab><GearIcon /></Tab>
      </Tabs>

      <MaRow>
        <ChipSlot>
          <Chip $w={108}>均线<Caret $w={15} $h={13} $c="#666" $ml={6} /></Chip>
        </ChipSlot>
        <MaGrid>
          <Ma $c={INK}><Fit w={188}>MA5:11.60↑</Fit></Ma>
          <Ma $c="#efb84e"><Fit w={157}>10:10.52↑</Fit></Ma>
          <Ma $c="#bd1680"><Fit w={157}>20:10.09↑</Fit></Ma>
          <Ma $c="#109a10"><Fit w={157}>30:10.00↑</Fit></Ma>
        </MaGrid>
        <ChipSlot>
          <Chip $w={126} $solid $pl={10}><Fit w={86}>DK点</Fit><Corner /></Chip>
        </ChipSlot>
        <ChipSlot $ml={40}>
          <Chip $w={132} $pl={10}><Fit w={107}>前复权</Fit></Chip>
        </ChipSlot>
      </MaRow>

      <CandleChart />

      <SliderRow>
        <Track>
          <Handle><Grip /><Grip /><Grip /></Handle>
          <Handle><Grip /><Grip /><Grip /></Handle>
        </Track>
      </SliderRow>

      <IndicatorRow $h={63}>
        <Chip $w={151}>成交量<Caret $w={15} $h={13} $c="#666" $ml={15} /></Chip>
        <IndicatorValue $c={INK} $w={154} $ml={5}><Fit w={144}>229.6万↑</Fit></IndicatorValue>
        <IndicatorValue $c="#efc020" $w={232}><Fit w={222}>MA1:113.4万↑</Fit></IndicatorValue>
        <IndicatorValue $c="#c82ccc" $w={232}><Fit w={222}>MA2:66.54万↑</Fit></IndicatorValue>
        <IndicatorValue $c="#109010"><Fit w={222}>MA3:44.24万↑</Fit></IndicatorValue>
      </IndicatorRow>
      <VolumeChart />

      <IndicatorRow $h={62}>
        <Chip $w={187}>主力意愿<Caret $w={15} $h={13} $c="#666" $ml={16} /></Chip>
        <IndicatorValue $c={INK} $w={169} $ml={5}><Fit w={168}>多空力度:</Fit></IndicatorValue>
        <IndicatorValue $c="#109a10"><Fit w={162}>-1268.46</Fit></IndicatorValue>
      </IndicatorRow>
      <ForceChart />

      <Banner>
        <HornIcon />
        <BannerText>看好创新药赛道，如何布局?</BannerText>
        <BannerRule />
        <CloseIcon size={33} color="#dd5a18" w={2.8} />
      </Banner>
      <Divider />

      <BottomNav>
        <IndexCell>
          <Caret $w={21} $h={7} $c="#808080" $ml={86} $up />
          <IndexValue><Fit w={143}>3864.18</Fit></IndexValue>
          <IndexRow>
            <IndexName>上证</IndexName>
            <Fit w={117}>-0.15%</Fit>
          </IndexRow>
        </IndexCell>
        {NAV.map(([label, Icon]) => (
          <NavItem key={label}>
            <Icon />
            <span>{label}</span>
          </NavItem>
        ))}
      </BottomNav>
    </Page>
  );
}
